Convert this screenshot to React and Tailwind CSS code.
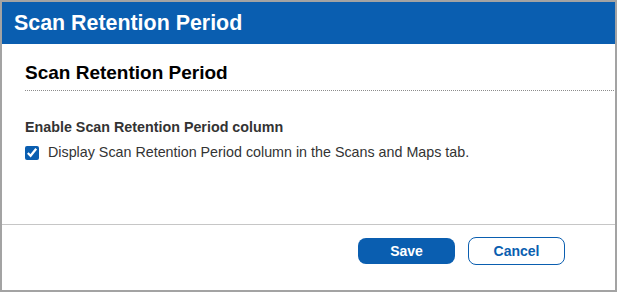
export default function App() {
  return (
    <div
      className="w-[617px] h-[292px] border-2 border-[#a3a3a3] bg-white flex flex-col"
      style={{ fontFamily: '"Liberation Sans", Arial, sans-serif' }}
    >
      {/* Title bar */}
      <div className="h-[42px] bg-[#0a5eb0] flex items-center pl-3">
        <h1 className="text-white font-bold text-[21.4px] leading-[24px]">
          Scan Retention Period
        </h1>
      </div>

      {/* Body */}
      <div className="flex-1 pl-[23px] pr-px">
        <div className="mt-[18px] pb-[6px] border-b border-dotted border-[#8c8c8c]">
          <h2 className="text-black font-bold text-[19px] leading-[22px]">
            Scan Retention Period
          </h2>
        </div>
        <div className="mt-[28px]">
          <p className="text-[#333333] font-bold text-[14.3px] leading-[17px]">
            Enable Scan Retention Period column
          </p>
          <label className="mt-[8px] flex items-center gap-[9px] text-[#333333] text-[14.3px] leading-[17px]">
            <input
              type="checkbox"
              defaultChecked
              className="w-[14px] h-[14px] m-0 accent-[#0a5eb0]"
            />
            <span>Display Scan Retention Period column in the Scans and Maps tab.</span>
          </label>
        </div>
      </div>

      {/* Footer */}
      <div className="h-[66px] border-t border-[#c6c6c6] flex justify-end items-start pt-[12px] pr-[50px] gap-[13px]">
        <button className="w-[97px] h-[26px] mt-px rounded-lg bg-[#0a5eb0] text-white font-bold text-[14px]">
          Save
        </button>
        <button className="w-[97px] h-[28px] rounded-lg border border-[#0a5eb0] bg-white text-[#0a5eb0] font-bold text-[14px]">
          Cancel
        </button>
      </div>
    </div>
  );
}
